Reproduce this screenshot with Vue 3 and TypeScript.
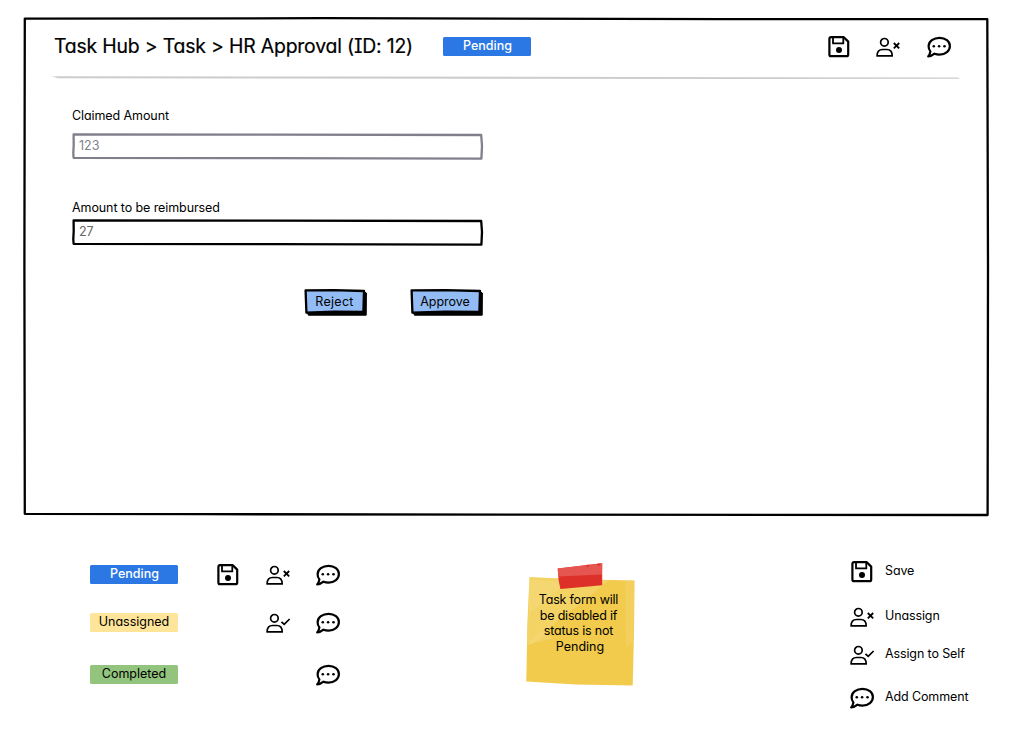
<script setup lang="ts">
type IconName = 'save' | 'unassign' | 'assign' | 'comment'
type Tone = 'pending' | 'unassigned' | 'completed'

interface StatusRow {
  label: string
  tone: Tone
  icons: (IconName | null)[]
}

interface LegendItem {
  icon: IconName
  label: string
}

const toolbar: IconName[] = ['save', 'unassign', 'comment']

const statuses: StatusRow[] = [
  { label: 'Pending', tone: 'pending', icons: ['save', 'unassign', 'comment'] },
  { label: 'Unassigned', tone: 'unassigned', icons: [null, 'assign', 'comment'] },
  { label: 'Completed', tone: 'completed', icons: [null, null, 'comment'] },
]

const legend: LegendItem[] = [
  { icon: 'save', label: 'Save' },
  { icon: 'unassign', label: 'Unassign' },
  { icon: 'assign', label: 'Assign to Self' },
  { icon: 'comment', label: 'Add Comment' },
]

const noteLines: string[] = ['Task form will', 'be disabled if', 'status is not', 'Pending']
</script>

<template>
  <div class="page">
    <svg class="defs" width="0" height="0" aria-hidden="true">
      <symbol id="i-save" viewBox="0 0 24 24" overflow="visible">
        <g fill="none" stroke="#000" stroke-linejoin="round">
          <path stroke-width="2.2" d="M4.2 2.2H16.8L21.2 6.6V19.4Q21.2 21.2 19.4 21.2H4.2Q2.4 21.2 2.4 19.4V4Q2.4 2.2 4.2 2.2Z" />
          <path stroke-width="1.8" d="M6 2.2V8.4H16.3V2.2" />
        </g>
        <circle cx="12" cy="15" r="3" />
      </symbol>
      <symbol id="i-person" viewBox="0 0 24 24" overflow="visible">
        <g fill="none" stroke="#000" stroke-width="1.7" stroke-linejoin="round">
          <circle cx="9.4" cy="7.3" r="3.8" />
          <path d="M2.1 20.9C2.1 16.6 4.4 14.5 7.6 14.5H11.8C15 14.5 17.2 16.6 17.2 20.9Z" />
        </g>
      </symbol>
      <symbol id="i-unassign" viewBox="0 0 24 24" overflow="visible">
        <use href="#i-person" width="24" height="24" />
        <path fill="none" stroke="#000" stroke-width="1.8" d="M18.8 8L24.2 13.4M24.2 8L18.8 13.4" />
      </symbol>
      <symbol id="i-assign" viewBox="0 0 24 24" overflow="visible">
        <use href="#i-person" width="24" height="24" />
        <path fill="none" stroke="#000" stroke-width="1.7" d="M16.4 10.8L19.2 13.4L24.6 8" />
      </symbol>
      <symbol id="i-comment" viewBox="0 0 24 24" overflow="visible">
        <path
          fill="none"
          stroke="#000"
          stroke-width="2.2"
          stroke-linejoin="round"
          d="M12.5 2.8C18.5 2.8 22.9 6.3 22.9 11.1S18.5 19.6 12.5 19.6C10.6 19.6 9 19.3 7.5 18.7C5.7 20.2 3.6 21.3 1.2 21.4C2.4 19.9 3.2 18.2 3.4 16.4C2.2 15 1.6 13.2 1.6 11.2C1.6 6.3 6.7 2.8 12.5 2.8Z"
        />
        <circle cx="6.8" cy="11.3" r="1.3" />
        <circle cx="12.1" cy="11.3" r="1.3" />
        <circle cx="17.5" cy="11.3" r="1.3" />
      </symbol>
    </svg>

    <main class="window">
      <svg class="sketch" viewBox="0 0 966 500" preserveAspectRatio="none" aria-hidden="true">
        <path class="ink" d="M1.8 1.6L300 1.2L700 2.2L964.3 2.2L965 250L964.6 498L500 497.6L180 497.2L1.8 496.8L1.4 250Z" />
      </svg>

      <header class="bar">
        <h1 class="title">Task Hub &gt; Task &gt; HR Approval (ID: 12)</h1>
        <span class="badge pending">Pending</span>
        <nav class="tools">
          <svg v-for="name in toolbar" :key="name" :class="['icon', name]">
            <use :href="`#i-${name}`" width="24" height="24" />
          </svg>
        </nav>
      </header>
      <svg class="rule" viewBox="0 0 908 4" aria-hidden="true">
        <path d="M0 .2L300 .6L906 1.6L908 2.8L700 3L6 2.3Z" />
      </svg>

      <section class="form">
        <label class="label">Claimed Amount</label>
        <div class="field muted">
          <svg class="sketch" viewBox="0 0 411 27" preserveAspectRatio="none" aria-hidden="true">
            <path d="M1.6 1.4L200 1.6L409.2 2L410 13L409.4 25.6L200 25.2L1.6 24.8L1.3 20L1.7 12Z" />
          </svg>
          <span>123</span>
        </div>
        <label class="label second">Amount to be reimbursed</label>
        <div class="field">
          <svg class="sketch" viewBox="0 0 411 27" preserveAspectRatio="none" aria-hidden="true">
            <path d="M1.6 1.4L200 1.6L409.2 2L410 13L409.4 25.6L200 25.2L1.6 24.8L1.3 20L1.7 12Z" />
          </svg>
          <span>27</span>
        </div>
        <div class="actions">
          <button class="btn reject" type="button">
            <svg class="sketch" viewBox="0 0 63 27" preserveAspectRatio="none" aria-hidden="true">
              <path class="shadow" d="M60 2.6L62.4 4L62.2 26.2L4.4 26.2L3.6 24Z" />
              <path class="face" d="M1.6 1.4L30 1.2L60 2L59.4 22.8L30 22.7L2.4 23.6Z" />
            </svg>
            <span>Reject</span>
          </button>
          <button class="btn approve" type="button">
            <svg class="sketch" viewBox="0 0 73 27" preserveAspectRatio="none" aria-hidden="true">
              <path class="shadow" d="M70 2.6L72.4 4L72.2 26.2L4.4 26.2L3.6 24Z" />
              <path class="face" d="M1.6 1.4L35 1.2L70 2L69.4 22.8L35 22.7L2.4 23.6Z" />
            </svg>
            <span>Approve</span>
          </button>
        </div>
      </section>
    </main>

    <footer class="notes">
      <div class="statuses">
        <div v-for="row in statuses" :key="row.label" class="status">
          <span :class="['badge', row.tone]">{{ row.label }}</span>
          <span v-for="(name, i) in row.icons" :key="i" class="slot">
            <svg v-if="name" :class="['icon', name]">
              <use :href="`#i-${name}`" width="24" height="24" />
            </svg>
          </span>
        </div>
      </div>

      <aside class="sticky">
        <svg class="paper" viewBox="0 0 110 124" aria-hidden="true">
          <path fill="#f2ca4c" d="M3.5 14.2L60 16.6L108.5 17.6L108 70L106.7 122.6L50 121.4L.3 118.6L1.4 60Z" />
          <path fill="#f5d976" opacity=".6" d="M3.5 14.2L60 16.6L83 17.2Q70 28 52 43Q30 57 14 76Q8 80 1.2 82Z" />
          <path fill="#f7e08d" opacity=".35" d="M3.4 17L43 18L12 44L3 49ZM1.2 82L28 75L15 68Z" />
          <path fill="#f6dc80" opacity=".35" d="M99 17.4L108.5 17.6L108 78L100 84Z" />
          <path fill="#dd3029" d="M31.7 5.4L76.2 .2L76.2 22.2L34.4 26L32.6 17Z" />
          <path fill="#e4564f" d="M31.7 5.4L76.2 .2L76 11.5L32.2 13.4Z" />
          <path fill="#dd3029" d="M59.5 2.1L63.5 1.7L62 4.4ZM70.5 .9L74.5 .4L73 3.2Z" />
        </svg>
        <p class="memo">
          <span v-for="line in noteLines" :key="line">{{ line }}</span>
        </p>
      </aside>

      <ul class="legend">
        <li v-for="item in legend" :key="item.icon">
          <svg :class="['icon', item.icon]">
            <use :href="`#i-${item.icon}`" width="24" height="24" />
          </svg>
          <span>{{ item.label }}</span>
        </li>
      </ul>
    </footer>
  </div>
</template>

<style>
body {
  margin: 0;
  background: #fff;
}
</style>

<style scoped>
.page {
  box-sizing: border-box;
  width: 1021px;
  height: 735px;
  padding: 17px 32px 0 23px;
  overflow: hidden;
  background: #fff;
  color: #000;
  font: 400 12.5px/16px Inter, 'Open Sans', sans-serif;
  font-feature-settings: 'cv11' 1, 'cv08' 1;
}
.defs {
  position: absolute;
}
.window {
  position: relative;
  box-sizing: border-box;
  height: 500px;
}
.sketch {
  position: absolute;
  inset: 0;
  width: 100%;
  height: 100%;
  overflow: visible;
}
.sketch path {
  fill: none;
  stroke: #000;
  stroke-width: 2.3;
  stroke-linejoin: round;
}
.bar {
  position: relative;
  display: flex;
  align-items: center;
  height: 59px;
  padding-left: 31px;
}
.title {
  width: 389px;
  margin: 0 0 2px;
  font-size: 19.4px;
  line-height: 24px;
  font-weight: 400;
  letter-spacing: -0.18px;
  -webkit-text-stroke: 0.2px #000;
  white-space: nowrap;
}
.badge {
  box-sizing: border-box;
  width: 88px;
  height: 19px;
  border-radius: 1.5px;
  line-height: 18px;
  text-align: center;
}
.pending {
  background: #2b78e4;
  color: #fff;
  font-weight: 500;
  text-indent: 1px;
}
.unassigned {
  background: #ffe599;
}
.completed {
  background: #93c47d;
}
.icon {
  display: block;
  flex: none;
  width: 24px;
  height: 24px;
  overflow: visible;
}
.tools {
  display: flex;
  gap: 24px;
  margin-left: 296px;
}
.tools .comment {
  margin-left: 4px;
}
.rule {
  display: block;
  width: 908px;
  height: 4px;
  margin-left: 29px;
}
.rule path {
  fill: #ccc;
}
.form {
  width: 411px;
  margin: 28px 0 0 49px;
}
.label {
  display: block;
  letter-spacing: -0.09px;
}
.label.second {
  margin-top: 40px;
}
.field {
  position: relative;
  height: 27px;
  margin-top: 9px;
  padding-left: 7px;
  line-height: 26px;
  color: #666;
}
.second + .field {
  margin-top: 3px;
}
.muted {
  color: #80808c;
}
.muted .sketch path {
  stroke: #80808c;
}
.actions {
  display: flex;
  justify-content: flex-end;
  gap: 43px;
  margin-top: 43px;
}
.btn {
  position: relative;
  height: 27px;
  padding: 0 3px 2px 0;
  border: 0;
  background: none;
  color: #000;
  font: inherit;
  font-feature-settings: inherit;
}
.btn span {
  position: relative;
}
.reject {
  width: 63px;
  padding-right: 2px;
  letter-spacing: 0.3px;
}
.approve {
  width: 73px;
}
.btn .face {
  fill: #93bcf4;
}
.btn .shadow {
  fill: #000;
  stroke-width: 1;
}
.notes {
  display: flex;
  align-items: flex-start;
}
.statuses {
  width: 436px;
  padding-top: 46px;
}
.status {
  display: flex;
  height: 24px;
  margin-bottom: 24px;
  padding-left: 67px;
}
.status:last-child {
  margin-top: 28px;
}
.status .badge {
  margin: 2px 38px 0 0;
}
.slot {
  width: 50px;
}
.slot .unassign,
.slot .assign {
  margin-left: -1px;
}
.sticky {
  position: relative;
  width: 110px;
  height: 124px;
  margin: 46px 0 0 67px;
}
.paper {
  position: absolute;
  inset: 0;
  width: 110px;
  height: 124px;
}
.memo {
  position: relative;
  display: flex;
  flex-direction: column;
  align-items: center;
  width: 105px;
  margin: 0;
  padding-top: 29px;
  line-height: 15.6px;
  letter-spacing: -0.2px;
}
.memo span:last-child {
  margin-left: 3px;
  letter-spacing: 0;
}
.legend {
  margin: 43px 0 0 213px;
  padding: 0;
  list-style: none;
}
.legend li {
  display: flex;
  align-items: center;
  gap: 12px;
  height: 24px;
  margin-bottom: 21px;
}
.legend li span {
  margin-bottom: 2px;
  letter-spacing: -0.12px;
}
.legend .save,
.legend .comment {
  margin: 0 -1px 0 1px;
}
.legend li:nth-child(2) {
  margin-bottom: 14px;
}
.legend li:nth-child(3) {
  margin-bottom: 19px;
}
</style>
